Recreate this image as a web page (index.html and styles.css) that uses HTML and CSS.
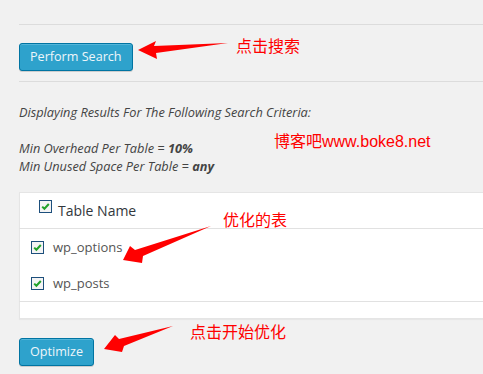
FILE: index.html
```html
<!DOCTYPE html>
<html>
<head>
<meta charset="utf-8">
<link rel="stylesheet" href="styles.css">
</head>
<body>
<div class="page">
  <div class="rule"></div>
  <div class="action">
    <button class="btn">Perform Search</button>
  </div>
  <div class="rule"></div>
  <div class="criteria">
    <p>Displaying Results For The Following Search Criteria:</p>
    <p class="gap">Min Overhead Per Table = <b>10%</b></p>
    <p>Min Unused Space Per Table = <b>any</b></p>
  </div>
  <table class="tables">
    <thead>
      <tr><th><span class="cb"><svg width="13" height="13" viewBox="0 0 13 13"><rect x="0.5" y="0.5" width="12" height="12" fill="#f4f4f4" stroke="#1d4f7c"/><path d="M3.2 6.6 L5.4 8.8 L9.8 4" fill="none" stroke="#22a22a" stroke-width="2"/></svg></span>Table Name</th></tr>
    </thead>
    <tbody>
      <tr><td><span class="cb"><svg width="13" height="13" viewBox="0 0 13 13"><rect x="0.5" y="0.5" width="12" height="12" fill="#f4f4f4" stroke="#1d4f7c"/><path d="M3.2 6.6 L5.4 8.8 L9.8 4" fill="none" stroke="#22a22a" stroke-width="2"/></svg></span>wp_options</td></tr>
      <tr><td><span class="cb"><svg width="13" height="13" viewBox="0 0 13 13"><rect x="0.5" y="0.5" width="12" height="12" fill="#f4f4f4" stroke="#1d4f7c"/><path d="M3.2 6.6 L5.4 8.8 L9.8 4" fill="none" stroke="#22a22a" stroke-width="2"/></svg></span>wp_posts</td></tr>
    </tbody>
    <tfoot>
      <tr><td></td></tr>
    </tfoot>
  </table>
  <div class="action2">
    <button class="btn">Optimize</button>
  </div>
</div>

<svg class="arrows" width="483" height="374" viewBox="0 0 483 374">
  <polygon fill="#ff0000" points="138,50 156,41 154,46 228,43 156,53 157,59"/>
  <polygon fill="#ff0000" points="123,260 130,246 135,250 211,226 143,256 142,263"/>
  <polygon fill="#ff0000" points="104,349 115,335 119,339 173,326 124,346 122,352"/>
</svg>
<span class="note n1">点击搜索</span>
<span class="note n2">博客吧www.boke8.net</span>
<span class="note n3">优化的表</span>
<span class="note n4">点击开始优化</span>
</body>
</html>
```

FILE: styles.css
```css
html, body {
  margin: 0;
  padding: 0;
  background: #f1f1f1;
  width: 483px;
  height: 374px;
  overflow: hidden;
}
body {
  position: relative;
  font-family: "Open Sans", "Noto Sans", sans-serif;
  color: #444;
}
.page {
  padding-left: 19px;
  padding-top: 24px;
}
.rule {
  height: 1px;
  background: #dcdcdc;
}
.action {
  padding: 18px 0 10px;
  display: flex;
}
.btn {
  font-family: "Open Sans", "Noto Sans", sans-serif;
  font-size: 12.6px;
  color: #eef6fa;
  background: #2ea2cc;
  border: 1px solid #0074a2;
  border-radius: 3px;
  box-shadow: inset 0 1px 0 rgba(120, 200, 230, 0.5), 0 1px 0 rgba(0, 0, 0, 0.15);
  height: 28px;
  padding: 0 10px;
  line-height: 26px;
  margin: 0;
}
.criteria {
  padding-top: 21px;
  font-style: italic;
  font-size: 12.75px;
  line-height: 18px;
  color: #444;
}
.criteria p {
  margin: 0;
}
.criteria p.gap {
  margin-top: 18px;
}
.criteria b {
  font-weight: 700;
}
.tables {
  margin-top: 17px;
  width: calc(100% + 20px);
  border-collapse: collapse;
  background: #fff;
  border: 1px solid #e5e5e5;
  box-shadow: 0 1px 1px rgba(0, 0, 0, 0.04);
}
.tables th {
  text-align: left;
  font-weight: 400;
  font-size: 14px;
  color: #32373c;
  height: 35px;
  padding: 0 0 0 19px;
  border-bottom: 1px solid #e1e1e1;
}
.tables th .cb {
  vertical-align: -1px;
  position: relative;
  top: -4px;
  margin-right: 6px;
}
.tables tbody td {
  font-size: 13px;
  color: #555;
  height: 36px;
  padding: 0 0 0 11px;
}
.tables tbody td .cb {
  margin-right: 9px;
  vertical-align: -2px;
}
.tables tfoot td {
  height: 16px;
  padding: 0;
  border-top: 1px solid #e1e1e1;
}
.cb {
  display: inline-block;
  width: 13px;
  height: 13px;
  line-height: 0;
}
.action2 {
  padding-top: 19px;
  display: flex;
}
.arrows {
  position: absolute;
  left: 0;
  top: 0;
}
.note {
  position: absolute;
  color: #ff0000;
  font-family: "Liberation Sans", "Noto Sans CJK SC", sans-serif;
  font-size: 16px;
  line-height: 18px;
  white-space: nowrap;
}
.n1 { left: 236px; top: 38px; }
.n2 { left: 274px; top: 133px; }
.n3 { left: 223px; top: 212px; }
.n4 { left: 190px; top: 324px; }
```
